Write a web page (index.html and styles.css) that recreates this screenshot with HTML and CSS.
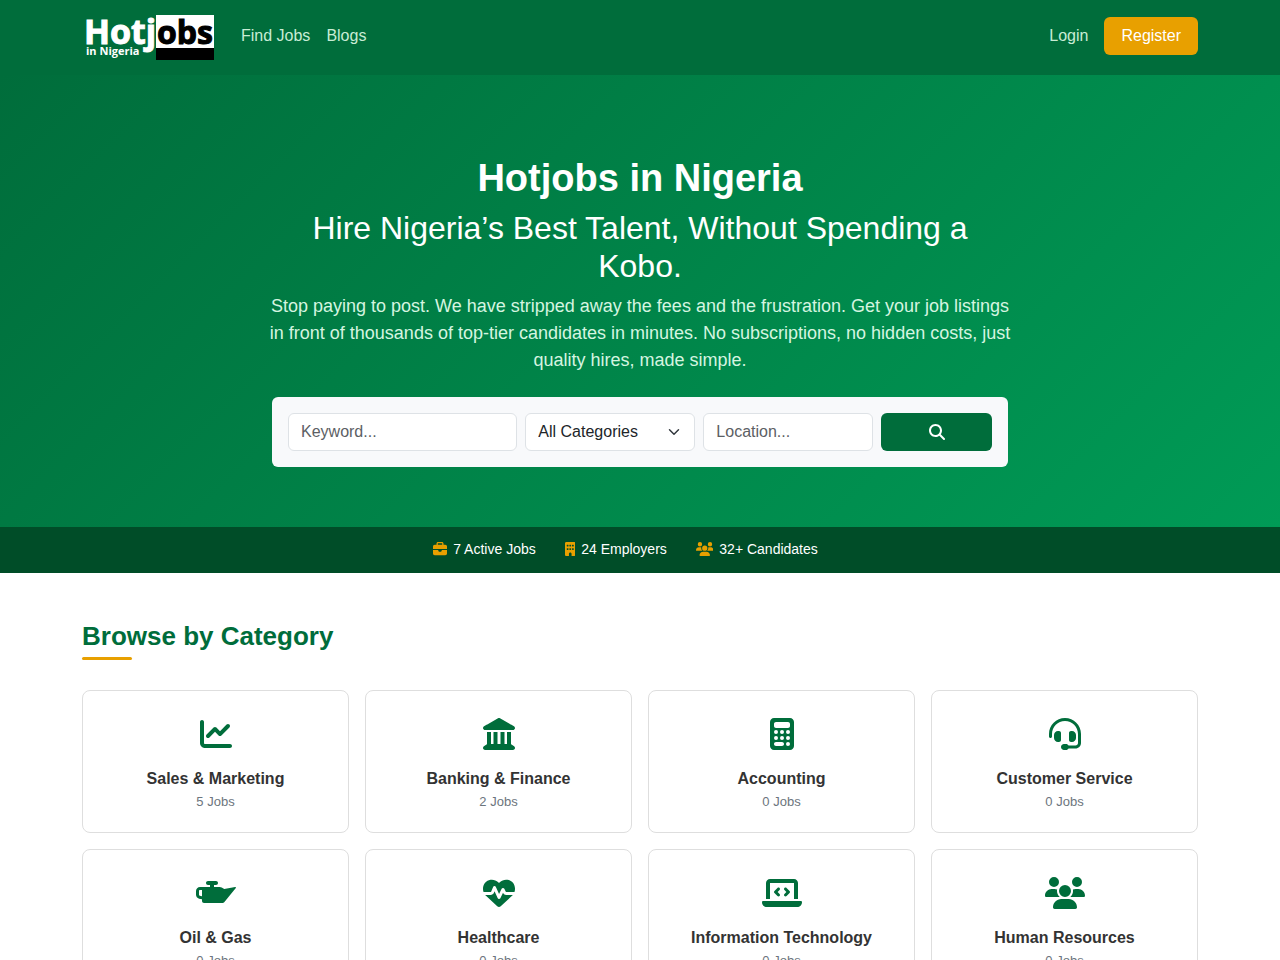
FILE: index.html
```html
<!DOCTYPE html>
<html lang="en">
<head>
  <meta charset="UTF-8">
  <meta name="viewport" content="width=device-width, initial-scale=1.0">
  <title>Hotjobs in Nigeria</title>
  <link rel="stylesheet" href="styles.css">
</head>
<body>
  <header class="navbar">
    <div class="container navbar-inner">
      <a class="brand" href="#" aria-label="Hotjobs in Nigeria">
        <svg class="logo" viewBox="0 0 135 45" width="135" height="45">
          <rect x="74" y="0" width="58" height="33" fill="#fff"/>
          <rect x="74" y="33" width="58" height="12" fill="#000"/>
          <text class="logo-big" x="2" y="29" fill="#fff" stroke="#fff">Hotj</text>
          <text class="logo-big logo-end" x="75" y="29" fill="#000" stroke="#000">obs</text>
          <text class="logo-small" x="4" y="40" fill="#fff">in Nigeria</text>
        </svg>
      </a>
      <nav class="nav-links">
        <a href="#">Find Jobs</a>
        <a href="#">Blogs</a>
      </nav>
      <div class="nav-links nav-right">
        <a href="#">Login</a>
        <a class="btn-register" href="#">Register</a>
      </div>
    </div>
  </header>

  <section class="hero">
    <div class="hero-inner">
      <h1>Hotjobs in Nigeria</h1>
      <h2>Hire Nigeria’s Best Talent, Without Spending a Kobo.</h2>
      <p>Stop paying to post. We have stripped away the fees and the frustration. Get your job listings in front of thousands of top-tier candidates in minutes. No subscriptions, no hidden costs, just quality hires, made simple.</p>
      <form class="search-box">
        <input class="field keyword" type="text" name="keyword" placeholder="Keyword..." aria-label="Keyword">
        <select class="field" name="category" aria-label="Category">
          <option>All Categories</option>
          <option>Sales &amp; Marketing</option>
          <option>Banking &amp; Finance</option>
          <option>Accounting</option>
          <option>Customer Service</option>
        </select>
        <input class="field" type="text" name="location" placeholder="Location..." aria-label="Location">
        <button class="btn-search" type="submit" aria-label="Search">
          <svg class="icon" viewBox="0 0 512 512"><path d="M416 208c0 45.9-14.9 88.3-40 122.7L502.6 457.4c12.5 12.5 12.5 32.8 0 45.3s-32.8 12.5-45.3 0L330.7 376c-34.4 25.2-76.8 40-122.7 40C93.1 416 0 322.9 0 208S93.1 0 208 0S416 93.1 416 208zM208 352a144 144 0 1 0 0-288 144 144 0 1 0 0 288z"/></svg>
        </button>
      </form>
    </div>
  </section>

  <section class="stats">
    <span class="stat">
      <svg class="icon" viewBox="0 0 512 512"><path d="M184 48H328c4.400 0 8 3.600 8 8V96H176V56c0-4.400 3.600-8 8-8zm-56 8V96H64C28.700 96 0 124.700 0 160v96H192 320 512V160c0-35.300-28.700-64-64-64H384V56c0-30.900-25.100-56-56-56H184c-30.900 0-56 25.100-56 56zM512 288H320v32c0 17.700-14.300 32-32 32H224c-17.700 0-32-14.300-32-32V288H0V416c0 35.300 28.700 64 64 64H448c35.300 0 64-28.700 64-64V288z"/></svg>
      7 Active Jobs
    </span>
    <span class="stat">
      <svg class="icon" viewBox="0 0 384 512"><path fill-rule="evenodd" d="M48 0C21.500 0 0 21.500 0 48V464c0 26.500 21.500 48 48 48h96V432c0-26.500 21.500-48 48-48s48 21.500 48 48v80h96c26.500 0 48-21.500 48-48V48c0-26.500-21.500-48-48-48H48zM80 96h32q16 0 16 16v32q0 16-16 16H80q-16 0-16-16v-32q0-16 16-16zM176 96h32q16 0 16 16v32q0 16-16 16h-32q-16 0-16-16v-32q0-16 16-16zM272 96h32q16 0 16 16v32q0 16-16 16h-32q-16 0-16-16v-32q0-16 16-16zM80 224h32q16 0 16 16v32q0 16-16 16H80q-16 0-16-16v-32q0-16 16-16zM176 224h32q16 0 16 16v32q0 16-16 16h-32q-16 0-16-16v-32q0-16 16-16zM272 224h32q16 0 16 16v32q0 16-16 16h-32q-16 0-16-16v-32q0-16 16-16z"/></svg>
      24 Employers
    </span>
    <span class="stat">
      <svg class="icon" viewBox="0 0 640 512"><path d="M144 0a80 80 0 1 1 0 160A80 80 0 1 1 144 0zM512 0a80 80 0 1 1 0 160A80 80 0 1 1 512 0zM0 298.700C0 239.800 47.800 192 106.700 192h42.700c15.900 0 31 3.500 44.600 9.700c-1.300 7.200-1.900 14.700-1.900 22.300c0 38.200 16.800 72.500 43.300 96H21.300C9.600 320 0 310.400 0 298.700zM405.300 320c26.600-23.500 43.300-57.800 43.300-96c0-7.600-.7-15-1.900-22.300c13.600-6.300 28.700-9.700 44.600-9.700h42.700C592.200 192 640 239.800 640 298.700c0 11.800-9.600 21.300-21.300 21.300H405.300zM224 224a96 96 0 1 1 192 0 96 96 0 1 1 -192 0zM128 485.300C128 411.700 187.700 352 261.300 352H378.700C452.300 352 512 411.700 512 485.300c0 14.700-11.900 26.700-26.700 26.700H154.700c-14.700 0-26.700-11.900-26.700-26.700z"/></svg>
      32+ Candidates
    </span>
  </section>

  <main class="container categories">
    <h2 class="section-title">Browse by Category</h2>
    <div class="category-grid">
      <a class="category-card" href="#">
        <svg class="icon" viewBox="0 0 512 512"><path d="M64 64c0-17.700-14.300-32-32-32S0 46.300 0 64V400c0 44.200 35.800 80 80 80H480c17.700 0 32-14.300 32-32s-14.300-32-32-32H80c-8.800 0-16-7.200-16-16V64zm406.600 86.600c12.500-12.500 12.500-32.800 0-45.300s-32.800-12.500-45.300 0L320 210.700l-57.400-57.400c-12.500-12.500-32.800-12.500-45.300 0l-112 112c-12.500 12.500-12.500 32.800 0 45.300s32.800 12.500 45.300 0L240 221.300l57.400 57.400c12.500 12.500 32.800 12.500 45.300 0l128-128z"/></svg>
        <h3>Sales &amp; Marketing</h3>
        <small>5 Jobs</small>
      </a>
      <a class="category-card" href="#">
        <svg class="icon" viewBox="0 0 512 512"><path d="M240.100 4.200c9.800-5.600 21.900-5.600 31.800 0l171.300 98.100L448 104v.9l47.900 27.400c12.600 7.200 18.800 22 15.100 36s-16.400 23.800-30.900 23.800H32c-14.500 0-27.200-9.800-30.900-23.800s2.500-28.800 15.100-36L64 104.900V104l4.800-1.600L240.100 4.200zM64 224h64V416h40V224h64V416h48V224h64V416h40V224h64V420.300c.6 .3 1.200 .7 1.800 1.100l48 32c11.700 7.800 17 22.400 12.900 35.900S494.100 512 480 512H32c-14.100 0-26.500-9.200-30.600-22.700s1.100-28.100 12.900-35.900l48-32c.6-.4 1.200-.7 1.800-1.100V224z"/></svg>
        <h3>Banking &amp; Finance</h3>
        <small>2 Jobs</small>
      </a>
      <a class="category-card" href="#">
        <svg class="icon" viewBox="0 0 384 512"><path d="M64 0C28.700 0 0 28.700 0 64V448c0 35.300 28.700 64 64 64H320c35.300 0 64-28.700 64-64V64c0-35.300-28.700-64-64-64H64zM96 64H288c17.700 0 32 14.300 32 32v32c0 17.700-14.300 32-32 32H96c-17.700 0-32-14.300-32-32V96c0-17.700 14.300-32 32-32zm32 160a32 32 0 1 1 -64 0 32 32 0 1 1 64 0zM96 352a32 32 0 1 1 0-64 32 32 0 1 1 0 64zM64 416c0-17.700 14.300-32 32-32h96c17.700 0 32 14.300 32 32s-14.300 32-32 32H96c-17.700 0-32-14.300-32-32zM192 256a32 32 0 1 1 0-64 32 32 0 1 1 0 64zm32 64a32 32 0 1 1 -64 0 32 32 0 1 1 64 0zm64-64a32 32 0 1 1 0-64 32 32 0 1 1 0 64zm32 64a32 32 0 1 1 -64 0 32 32 0 1 1 64 0zM288 448a32 32 0 1 1 0-64 32 32 0 1 1 0 64z" fill-rule="evenodd"/></svg>
        <h3>Accounting</h3>
        <small>0 Jobs</small>
      </a>
      <a class="category-card" href="#">
        <svg class="icon" viewBox="0 0 512 512"><path d="M256 48C141.100 48 48 141.100 48 256v40c0 13.300-10.700 24-24 24s-24-10.700-24-24V256C0 114.600 114.600 0 256 0S512 114.600 512 256V400.100c0 48.600-39.400 88-88.100 88L313.600 488c-8.300 14.300-23.800 24-41.600 24H240c-26.500 0-48-21.500-48-48s21.500-48 48-48h32c17.800 0 33.300 9.700 41.600 24l110.400 .1c22.100 0 40-17.900 40-40V256c0-114.900-93.100-208-208-208zM144 208h16c17.700 0 32 14.300 32 32V352c0 17.700-14.300 32-32 32H144c-35.300 0-64-28.700-64-64V272c0-35.300 28.700-64 64-64zm224 0c35.300 0 64 28.700 64 64v48c0 35.300-28.700 64-64 64H352c-17.700 0-32-14.300-32-32V240c0-17.700 14.300-32 32-32h16z"/></svg>
        <h3>Customer Service</h3>
        <small>0 Jobs</small>
      </a>
      <a class="category-card" href="#">
        <svg class="icon" viewBox="0 0 640 512"><path fill-rule="evenodd" d="M320 128c17.700 0 32-14.300 32-32s-14.300-32-32-32H192c-17.700 0-32 14.300-32 32s14.300 32 32 32h32v32H64c-35 0-64 28-64 64v60c0 29.600 20.200 55.400 49 62.300L96 357.500V384c0 17.700 14.300 32 32 32H426.500c9.600 0 18.700-4.300 24.700-11.700L637.200 176.800c6-8-1-19-11-16.500L452 191.700l-40.500-23.100c-9.500-5.600-20.400-8.600-31.600-8.600H288V128h32zM96 208V308.200l-36.800-8.900C52 298 48 291 48 284V224c0-8.800 7.200-16 16-16H96z"/></svg>
        <h3>Oil &amp; Gas</h3>
        <small>0 Jobs</small>
      </a>
      <a class="category-card" href="#">
        <svg class="icon" viewBox="0 0 512 512"><path d="M228.300 469.100L47.600 300.400c-4.200-3.900-8.200-8.100-11.900-12.400h87c22.600 0 43-13.600 51.700-34.500l10.500-25.200 49.300 109.500c3.800 8.500 12.100 14 21.400 14.100s17.800-5 22-13.300L320 253.700l1.700 3.400c9.500 19 28.900 31 50.100 31H476.300c-3.700 4.300-7.700 8.500-11.900 12.400L283.700 469.100c-7.500 7-17.400 10.900-27.700 10.900s-20.200-3.900-27.700-10.900zM503.700 240h-132c-3 0-5.800-1.700-7.200-4.400l-23.200-46.300c-4.100-8.100-12.400-13.300-21.500-13.300s-17.400 5.100-21.500 13.300l-41.400 82.800L205.900 158.200c-3.900-8.700-12.700-14.300-22.200-14.100s-18.100 5.900-21.800 14.800l-31.800 76.300c-1.200 3-4.200 4.900-7.400 4.900H16c-2.600 0-5 .4-7.300 1.100C3 225.200 0 208.200 0 190.900v-5.800c0-69.900 50.500-129.500 119.400-141C165 36.500 211.400 51.400 244 84l12 12 12-12c32.600-32.600 79-47.500 124.600-39.900C461.500 55.600 512 115.200 512 185.100v5.800c0 16.900-2.800 33.500-8.300 49.100z"/></svg>
        <h3>Healthcare</h3>
        <small>0 Jobs</small>
      </a>
      <a class="category-card" href="#">
        <svg class="icon" viewBox="0 0 640 512"><path d="M64 96c0-35.300 28.700-64 64-64H512c35.300 0 64 28.700 64 64V352H512V96H128V352H64V96zM0 403.200C0 392.600 8.600 384 19.200 384H620.800c10.600 0 19.200 8.600 19.200 19.200c0 42.400-34.400 76.800-76.800 76.800H76.800C34.400 480 0 445.600 0 403.200zM281 209l-31 31 31 31c9.400 9.400 9.400 24.600 0 33.900s-24.600 9.400-33.900 0l-48-48c-9.400-9.400-9.400-24.600 0-33.900l48-48c9.400-9.400 24.600-9.400 33.900 0s9.400 24.600 0 33.900zM393 175l48 48c9.400 9.400 9.400 24.600 0 33.900l-48 48c-9.400 9.400-24.600 9.400-33.900 0s-9.400-24.600 0-33.900l31-31-31-31c-9.400-9.400-9.400-24.600 0-33.900s24.600-9.400 33.900 0z"/></svg>
        <h3>Information Technology</h3>
        <small>0 Jobs</small>
      </a>
      <a class="category-card" href="#">
        <svg class="icon" viewBox="0 0 640 512"><path d="M144 0a80 80 0 1 1 0 160A80 80 0 1 1 144 0zM512 0a80 80 0 1 1 0 160A80 80 0 1 1 512 0zM0 298.700C0 239.800 47.800 192 106.700 192h42.700c15.900 0 31 3.500 44.600 9.700c-1.300 7.200-1.900 14.700-1.900 22.300c0 38.200 16.800 72.500 43.300 96H21.300C9.600 320 0 310.400 0 298.700zM405.300 320c26.600-23.500 43.300-57.800 43.300-96c0-7.600-.7-15-1.900-22.300c13.600-6.300 28.700-9.700 44.600-9.700h42.700C592.200 192 640 239.800 640 298.700c0 11.800-9.600 21.300-21.300 21.300H405.300zM224 224a96 96 0 1 1 192 0 96 96 0 1 1 -192 0zM128 485.300C128 411.700 187.700 352 261.300 352H378.700C452.300 352 512 411.700 512 485.300c0 14.700-11.900 26.700-26.700 26.700H154.700c-14.700 0-26.700-11.900-26.700-26.700z"/></svg>
        <h3>Human Resources</h3>
        <small>0 Jobs</small>
      </a>
    </div>
  </main>
</body>
</html>
```
FILE: styles.css
```css
* {
  box-sizing: border-box;
}

body {
  margin: 0;
  font-family: "Liberation Sans", Arial, sans-serif;
  font-size: 16px;
  line-height: 24px;
  color: #333;
  background-color: #fff;
}

h1,
h2,
h3,
p {
  margin: 0;
}

a {
  text-decoration: none;
}

.container {
  max-width: 1140px;
  margin: 0 auto;
  padding: 0 12px;
}

.icon {
  height: 1em;
  fill: currentColor;
}

/* Navbar */
.navbar {
  background-color: #006d3b;
  padding: 12px 0 15px;
}

.navbar-inner {
  display: flex;
  align-items: center;
}

.brand {
  margin-right: 16px;
  padding-top: 3px;
}

.logo {
  display: block;
  overflow: visible;
}

.logo-big,
.logo-small {
  font-family: "Open Sans", "Noto Sans", sans-serif;
  font-weight: bold;
}

.logo-big {
  font-size: 34px;
  stroke-width: 1px;
}

.logo-end {
  font-size: 32px;
}

.logo-small {
  font-size: 11px;
}

.nav-links {
  display: flex;
  align-items: center;
}

.nav-links a {
  padding: 8px;
  color: #c8ecd5;
}

.nav-right {
  margin-left: auto;
  gap: 8px;
}

.nav-links .btn-register {
  padding: 7px 17px;
  color: #fff;
  background-color: #e8a000;
  border-radius: 6px;
}

/* Hero */
.hero {
  padding: 80px 0 60px;
  color: #fff;
  text-align: center;
  background: linear-gradient(135deg, #006d3b, #009b56);
}

.hero-inner {
  max-width: 760px;
  margin: 0 auto;
  padding: 0 12px;
}

.hero h1 {
  font-size: 38px;
  line-height: 46px;
  margin-bottom: 8px;
}

.hero h2 {
  font-size: 32px;
  line-height: 38px;
  font-weight: normal;
  margin-bottom: 8px;
}

.hero p {
  margin: 0 -6px 23px;
  font-size: 18px;
  line-height: 27px;
  color: #d5f5e0;
}

.search-box {
  display: grid;
  grid-template-columns: repeat(12, 1fr);
  gap: 8px;
  padding: 16px;
  background-color: #f8f9fb;
  border-radius: 6px;
}

.field {
  grid-column: span 3;
  width: 100%;
  height: 38px;
  padding: 6px 12px;
  font: inherit;
  color: #212529;
  background-color: #fff;
  border: 1px solid #dee2e6;
  border-radius: 6px;
}

.field::placeholder {
  color: #5c6064;
}

.keyword {
  grid-column: span 4;
}

select.field {
  appearance: none;
  background-image: url("data:image/svg+xml,%3Csvg xmlns='http://www.w3.org/2000/svg' viewBox='0 0 16 16'%3E%3Cpath fill='none' stroke='%23343a40' stroke-linecap='round' stroke-linejoin='round' stroke-width='2' d='m2 5 6 6 6-6'/%3E%3C/svg%3E");
  background-repeat: no-repeat;
  background-position: right 12px center;
  background-size: 16px 12px;
}

.btn-search {
  grid-column: span 2;
  display: flex;
  align-items: center;
  justify-content: center;
  font-size: 16px;
  color: #fff;
  background-color: #006d3b;
  border: none;
  border-radius: 6px;
}

/* Stats bar */
.stats {
  display: flex;
  justify-content: center;
  padding: 11px 0 13px;
  font-size: 14px;
  line-height: 22px;
  color: #fff;
  background-color: #004d28;
}

.stat {
  display: flex;
  align-items: center;
  gap: 6px;
  margin-right: 29px;
}

.stat .icon {
  color: #e8a000;
}

/* Categories */
.categories {
  padding-top: 48px;
  padding-bottom: 48px;
}

.section-title {
  margin-bottom: 30px;
  font-size: 26px;
  line-height: 31px;
  color: #006d3b;
}

.section-title::after {
  content: "";
  display: block;
  width: 50px;
  height: 3px;
  margin-top: 5px;
  background-color: #e8a000;
  border-radius: 2px;
}

.category-grid {
  display: grid;
  grid-template-columns: repeat(4, 1fr);
  gap: 16px;
}

.category-card {
  display: flex;
  flex-direction: column;
  align-items: center;
  padding: 27px 16px 19px;
  color: #333;
  border: 1px solid #dedede;
  border-radius: 8px;
}

.category-card .icon {
  font-size: 32px;
  color: #006d3b;
  margin-bottom: 17px;
}

.category-card h3 {
  font-size: 16px;
  line-height: 24px;
}

.category-card small {
  font-size: 13px;
  line-height: 22px;
  color: #6c757d;
}

@media (max-width: 768px) {
  .category-grid {
    grid-template-columns: repeat(2, 1fr);
  }

  .field,
  .btn-search {
    grid-column: span 12;
    min-height: 38px;
  }
}
```
